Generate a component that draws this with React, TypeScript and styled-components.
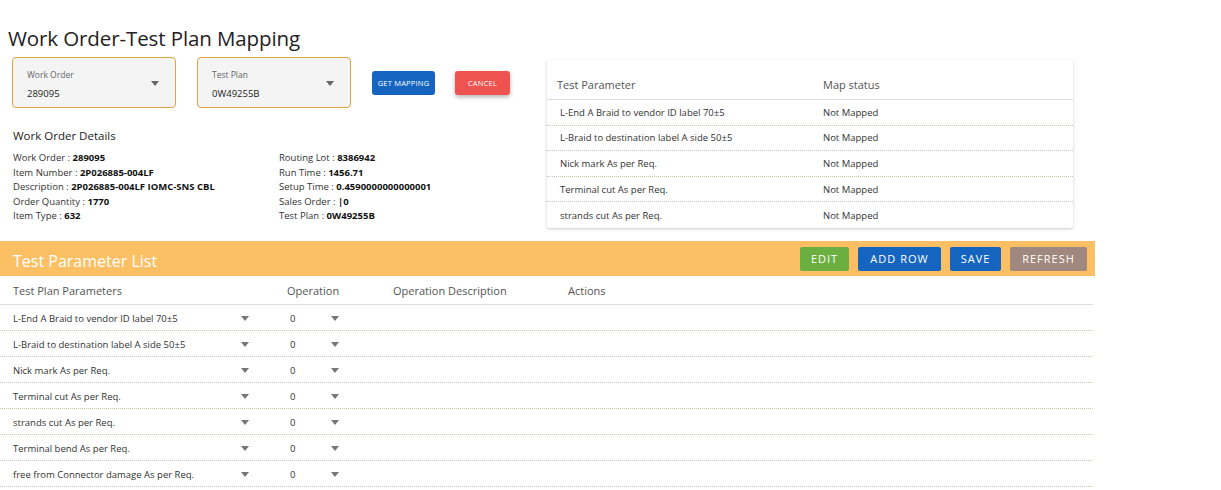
import React from "react";
import styled, { createGlobalStyle } from "styled-components";

const Global = createGlobalStyle`
  html, body { margin: 0; padding: 0; background: #fff; }
  body { font-family: "Segoe UI", "Open Sans", "Noto Sans", sans-serif; color: #222; }
  * { box-sizing: border-box; }
`;

const Page = styled.div`
  width: 1221px;
  height: 490px;
  overflow: hidden;
`;

const Title = styled.h1`
  margin: 0;
  padding: 24px 0 0 8px;
  height: 57px;
  font-size: 20.5px;
  font-weight: 400;
  color: #222;
  letter-spacing: -0.1px;
`;

const Top = styled.div`
  display: flex;
  height: 184px;
`;

const LeftCol = styled.div`
  width: 547px;
  flex: none;
`;

const SelectRow = styled.div`
  display: flex;
  align-items: center;
  padding-left: 12px;
  height: 51px;
`;

const SelectBox = styled.div<{ $w: number; $mr: number }>`
  width: ${(p) => p.$w}px;
  margin-right: ${(p) => p.$mr}px;
  height: 51px;
  border: 1px solid #e0a43c;
  border-radius: 4px;
  background: #f4f4f4;
  padding: 11px 0 0 14px;
  position: relative;
`;

const SelectLabel = styled.div`
  font-size: 8.5px;
  color: #666;
  line-height: 12px;
`;

const SelectValue = styled.div`
  font-size: 9.5px;
  color: #222;
  margin-top: 7px;
  line-height: 12px;
`;

const Caret = styled.span<{ $c?: string }>`
  display: inline-block;
  width: 0;
  height: 0;
  border-left: 4.5px solid transparent;
  border-right: 4.5px solid transparent;
  border-top: 5px solid ${(p) => p.$c || "#666"};
`;

const SelectCaret = styled.div`
  position: absolute;
  right: 16px;
  top: 23px;
  display: flex;
`;

const Btn = styled.button<{ $bg: string; $w: number; $shadow?: boolean }>`
  width: ${(p) => p.$w}px;
  height: 24px;
  border: none;
  border-radius: 3px;
  background: ${(p) => p.$bg};
  color: #fff;
  font-family: inherit;
  font-size: 7.5px;
  letter-spacing: 0.2px;
  padding: 0;
  margin-right: 20px;
  box-shadow: ${(p) => (p.$shadow ? "0 2px 4px rgba(0,0,0,0.3)" : "none")};
  text-transform: uppercase;
`;

const Details = styled.div`
  padding: 20px 0 0 13px;
`;

const DetailsTitle = styled.div`
  font-size: 11.5px;
  color: #222;
  line-height: 16px;
  margin-bottom: 7px;
`;

const DetailsGrid = styled.div`
  display: grid;
  grid-template-columns: 266px 1fr;
  grid-auto-flow: column;
  grid-template-rows: repeat(5, 14.6px);
`;

const DetailItem = styled.div`
  font-size: 9.5px;
  color: #333;
  line-height: 14.6px;
  white-space: nowrap;
  b {
    font-weight: 700;
    color: #111;
  }
`;

const Card = styled.div`
  margin-top: 3px;
  width: 526px;
  height: 168px;
  background: #fff;
  box-shadow: 0 1px 3px rgba(0, 0, 0, 0.22);
  border-radius: 2px;
`;

const CardHead = styled.div`
  display: grid;
  grid-template-columns: 266px 1fr;
  height: 40px;
  align-items: end;
  padding: 0 0 7px 10px;
  border-bottom: 1px solid #ddd;
  font-size: 11px;
  color: #555;
`;

const CardRow = styled.div<{ $last?: boolean }>`
  display: grid;
  grid-template-columns: 263px 1fr;
  height: 25.6px;
  align-items: center;
  padding-left: 13px;
  font-size: 9.5px;
  color: #333;
  border-bottom: ${(p) => (p.$last ? "none" : "1px dotted #cfc6ad")};
`;

const Bar = styled.div`
  width: 1095px;
  height: 35px;
  background: #fdbf63;
  display: flex;
  align-items: center;
  padding: 0 8px 0 13px;
`;

const BarTitle = styled.div`
  flex: 1;
  font-size: 16px;
  color: #fff;
  padding-top: 4px;
`;

const BarBtn = styled.button<{ $bg: string; $w: number }>`
  width: ${(p) => p.$w}px;
  height: 24px;
  margin-left: 9px;
  border: none;
  border-radius: 2px;
  background: ${(p) => p.$bg};
  color: #fff;
  font-family: inherit;
  font-size: 11px;
  letter-spacing: 1px;
  padding: 0;
`;

const Table = styled.div`
  width: 1093px;
`;

const cols = "274px 106px 175px 1fr";

const THead = styled.div`
  display: grid;
  grid-template-columns: ${cols};
  height: 29px;
  align-items: end;
  padding: 0 0 6px 13px;
  border-bottom: 1px solid #ddd;
  font-size: 11px;
  color: #555;
`;

const TRow = styled.div`
  display: grid;
  grid-template-columns: 228px 49px 41px 1fr;
  height: 26px;
  align-items: center;
  padding: 1px 0 0 13px;
  border-bottom: 1px dotted #cfc6ad;
  font-size: 9.5px;
  color: #333;
`;

const CaretCell = styled.div`
  display: flex;
  padding-top: 1px;
`;

const card = [
  "L-End A Braid to vendor ID label 70±5",
  "L-Braid to destination label A side 50±5",
  "Nick mark As per Req.",
  "Terminal cut As per Req.",
  "strands cut As per Req.",
];

const rows = [
  ...card,
  "Terminal bend As per Req.",
  "free from Connector damage As per Req.",
];

export default function App() {
  return (
    <Page>
      <Global />
      <Title>Work Order-Test Plan Mapping</Title>
      <Top>
        <LeftCol>
          <SelectRow>
            <SelectBox $w={164} $mr={21}>
              <SelectLabel>Work Order</SelectLabel>
              <SelectValue>289095</SelectValue>
              <SelectCaret>
                <Caret />
              </SelectCaret>
            </SelectBox>
            <SelectBox $w={154} $mr={21}>
              <SelectLabel>Test Plan</SelectLabel>
              <SelectValue>0W49255B</SelectValue>
              <SelectCaret>
                <Caret />
              </SelectCaret>
            </SelectBox>
            <Btn $bg="#1565c0" $w={63}>Get Mapping</Btn>
            <Btn $bg="#ef5350" $w={55} $shadow>
              Cancel
            </Btn>
          </SelectRow>
          <Details>
            <DetailsTitle>Work Order Details</DetailsTitle>
            <DetailsGrid>
              <DetailItem>
                Work Order : <b>289095</b>
              </DetailItem>
              <DetailItem>
                Item Number : <b>2P026885-004LF</b>
              </DetailItem>
              <DetailItem>
                Description : <b>2P026885-004LF IOMC-SNS CBL</b>
              </DetailItem>
              <DetailItem>
                Order Quantity : <b>1770</b>
              </DetailItem>
              <DetailItem>
                Item Type : <b>632</b>
              </DetailItem>
              <DetailItem>
                Routing Lot : <b>8386942</b>
              </DetailItem>
              <DetailItem>
                Run Time : <b>1456.71</b>
              </DetailItem>
              <DetailItem>
                Setup Time : <b>0.4590000000000001</b>
              </DetailItem>
              <DetailItem>
                Sales Order : <b>|0</b>
              </DetailItem>
              <DetailItem>
                Test Plan : <b>0W49255B</b>
              </DetailItem>
            </DetailsGrid>
          </Details>
        </LeftCol>
        <Card>
          <CardHead>
            <div>Test Parameter</div>
            <div>Map status</div>
          </CardHead>
          {card.map((c, i) => (
            <CardRow key={c} $last={i === card.length - 1}>
              <div>{c}</div>
              <div>Not Mapped</div>
            </CardRow>
          ))}
        </Card>
      </Top>
      <Bar>
        <BarTitle>Test Parameter List</BarTitle>
        <BarBtn $bg="#6aaf3f" $w={49}>EDIT</BarBtn>
        <BarBtn $bg="#1565c0" $w={83}>ADD ROW</BarBtn>
        <BarBtn $bg="#1565c0" $w={51}>SAVE</BarBtn>
        <BarBtn $bg="#a1887f" $w={77}>REFRESH</BarBtn>
      </Bar>
      <Table>
        <THead>
          <div>Test Plan Parameters</div>
          <div>Operation</div>
          <div>Operation Description</div>
          <div>Actions</div>
        </THead>
        {rows.map((r) => (
          <TRow key={r}>
            <div>{r}</div>
            <CaretCell>
              <Caret $c="#777" />
            </CaretCell>
            <div>0</div>
            <CaretCell>
              <Caret $c="#777" />
            </CaretCell>
          </TRow>
        ))}
      </Table>
    </Page>
  );
}
